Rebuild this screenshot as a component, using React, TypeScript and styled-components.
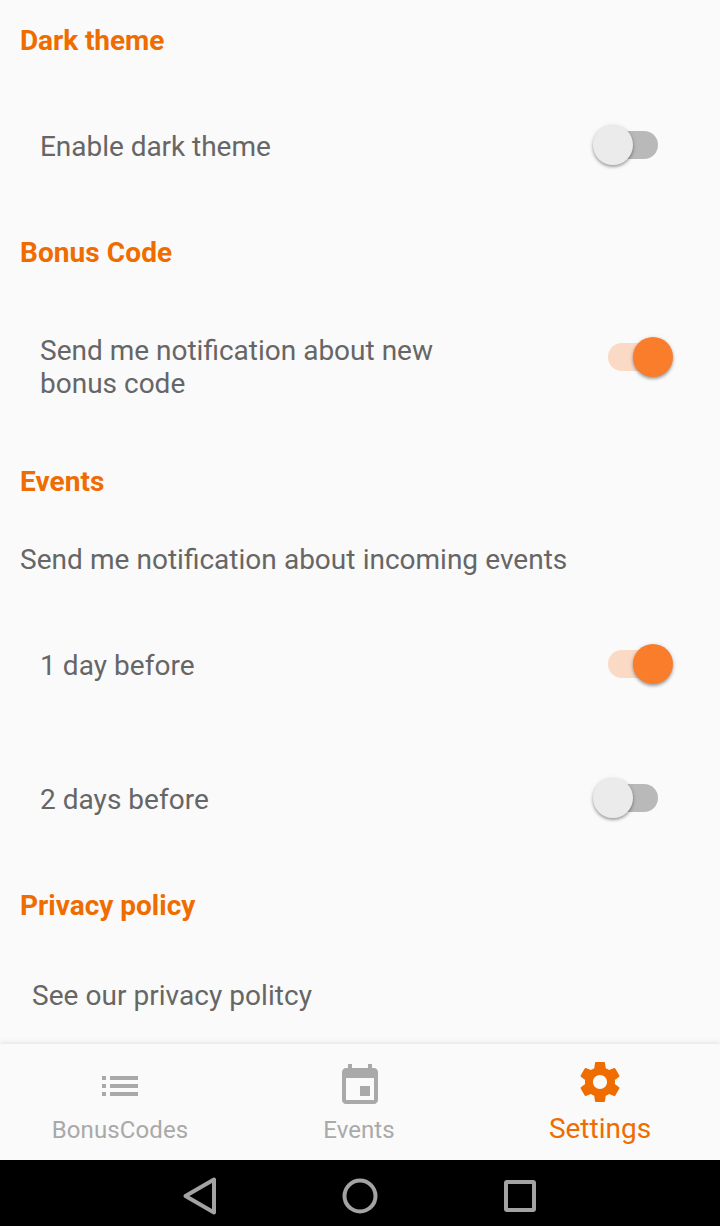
import React from 'react';
import styled, { createGlobalStyle } from 'styled-components';

const GlobalStyle = createGlobalStyle`
  * { box-sizing: border-box; }
  body { margin: 0; background: #fafafa; font-family: Roboto, sans-serif; }
`;
const Screen = styled.div`
  width: 720px; height: 1226px; display: flex; flex-direction: column;
  background: #fafafa; overflow: hidden;
`;
const Content = styled.main`
  flex: 1; min-height: 0; overflow: hidden; padding-top: 24px;
`;
const Heading = styled.h2<{ $track?: number }>`
  margin: 0; padding-left: 20px; height: 33px;
  font-size: 28px; line-height: 33px; font-weight: 700; color: #ef6c00;
  letter-spacing: ${p => p.$track ?? 0}px;
`;
const Row = styled.div<{ $h: number; $pad?: number }>`
  display: flex; align-items: center; justify-content: space-between;
  height: ${p => p.$h}px; padding: 0 62px 0 ${p => p.$pad ?? 40}px;
`;
const Label = styled.span<{ $w?: number; $track?: number; $words?: number }>`
  font-size: 28px; line-height: 33px; color: #666;
  letter-spacing: ${p => p.$track ?? 0}px;
  word-spacing: ${p => p.$words ?? 0}px;
  width: ${p => (p.$w ? p.$w + 'px' : 'auto')}; white-space: ${p => (p.$w ? 'normal' : 'nowrap')};
`;
const Toggle = styled.button<{ $on?: boolean; $up?: number }>`
  display: flex; align-items: center; justify-content: ${p => (p.$on ? 'flex-end' : 'flex-start')};
  border: 0; width: 50px; height: 28px; padding: 0; border-radius: 14px;
  background: ${p => (p.$on ? '#fad9c5' : '#b9b9b9')};
  margin-bottom: ${p => p.$up ?? 3}px;
`;
const Thumb = styled.span<{ $on?: boolean }>`
  flex: none; width: 40px; height: 40px; border-radius: 50%;
  margin: ${p => (p.$on ? '0 -15px 0 0' : '0 0 0 -15px')};
  background: ${p => (p.$on ? '#f97d2b' : '#ebebeb')};
  box-shadow: 0 2px 3px rgba(0,0,0,.28), 0 1px 5px rgba(0,0,0,.14);
`;
const Tabs = styled.nav`
  height: 116px; display: grid; grid-template-columns: repeat(3, 1fr);
  background: #fafafa; box-shadow: 0 -1px 5px rgba(0,0,0,.1); z-index: 1;
`;
const Tab = styled.a<{ $active?: boolean }>`
  display: flex; flex-direction: column; align-items: center;
  padding-top: ${p => (p.$active ? 14 : 18)}px;
  color: ${p => (p.$active ? '#ef6c00' : '#a9a9a9')};
  font-size: ${p => (p.$active ? 28 : 24)}px; line-height: 32px;
  svg { width: 48px; height: 48px; display: block; fill: currentColor; }
`;
const TabLabel = styled.span<{ $top: number; $track?: number; $shift?: number }>`
  margin-top: ${p => p.$top}px; margin-right: ${p => p.$shift ?? 0}px;
  letter-spacing: ${p => p.$track ?? 0}px;
`;
const SystemBar = styled.footer`
  height: 66px; background: #000; display: flex; justify-content: center; padding-top: 16px; gap: 120px;
  svg { width: 40px; height: 40px; display: block; fill: none; stroke: #a3a3a3; stroke-width: 4; }
`;

function Switch({ on, up }: { on?: boolean; up?: number }) {
  return <Toggle type="button" role="switch" aria-checked={!!on} $on={on} $up={up}><Thumb $on={on} /></Toggle>;
}

export default function App() {
  return (
    <Screen>
      <GlobalStyle />
      <Content>
        <Heading $track={-0.08}>Dark theme</Heading>
        <Row $h={179}><Label $track={-0.04}>Enable dark theme</Label><Switch /></Row>
        <Heading $track={0.08}>Bonus Code</Heading>
        <Row $h={196}><Label $w={420}>Send me notification about new bonus code</Label><Switch on up={20} /></Row>
        <Heading $track={0.08}>Events</Heading>
        <Row $h={123} $pad={20}><Label $words={0.25}>Send me notification about incoming events</Label></Row>
        <Row $h={89}><Label $track={0.06}>1 day before</Label><Switch on /></Row>
        <Row $h={179}><Label $track={0.03}>2 days before</Label><Switch /></Row>
        <Heading>Privacy policy</Heading>
        <Row $h={147} $pad={32}><Label $track={0.045}>See our privacy politcy</Label></Row>
      </Content>
      <Tabs>
        <Tab>
          <svg viewBox="0 0 48 48"><path d="M6 14h4v4H6zM14 14h28v4H14zM6 22h4v4H6zM14 22h28v4H14zM6 30h4v4H6zM14 30h28v4H14z" /></svg>
          <TabLabel $top={4} $track={0.1}>BonusCodes</TabLabel>
        </Tab>
        <Tab>
          <svg viewBox="0 0 24 24"><path d="M17 12h-5v5h5v-5zM16 1v2H8V1H6v2H5c-1.11 0-1.99.9-1.99 2L3 19c0 1.1.89 2 2 2h14c1.1 0 2-.9 2-2V5c0-1.1-.9-2-2-2h-1V1h-2zm3 18H5V8h14v11z" /></svg>
          <TabLabel $top={4} $track={0.08} $shift={2}>Events</TabLabel>
        </Tab>
        <Tab $active>
          <svg viewBox="0 0 24 24"><path d="M19.43 12.98c.04-.32.07-.64.07-.98s-.03-.66-.07-.98l2.11-1.65c.19-.15.24-.42.12-.64l-2-3.46c-.12-.22-.39-.3-.61-.22l-2.49 1c-.52-.4-1.08-.73-1.69-.98l-.38-2.65C14.46 2.18 14.25 2 14 2h-4c-.25 0-.46.18-.49.42l-.38 2.65c-.61.25-1.17.59-1.69.98l-2.49-1c-.23-.09-.49 0-.61.22l-2 3.46c-.13.22-.07.49.12.64l2.11 1.65c-.04.32-.07.65-.07.98s.03.66.07.98l-2.11 1.65c-.19.15-.24.42-.12.64l2 3.46c.12.22.39.3.61.22l2.49-1c.52.4 1.08.73 1.69.98l.38 2.65c.03.24.24.42.49.42h4c.25 0 .46-.18.49-.42l.38-2.65c.61-.25 1.17-.59 1.69-.98l2.49 1c.23.09.49 0 .61-.22l2-3.46c.12-.22.07-.49-.12-.64l-2.11-1.65zM12 15.5c-1.93 0-3.5-1.57-3.5-3.5s1.57-3.5 3.5-3.5 3.5 1.57 3.5 3.5-1.57 3.5-3.5 3.5z" /></svg>
          <TabLabel $top={7}>Settings</TabLabel>
        </Tab>
      </Tabs>
      <SystemBar>
        <svg viewBox="0 0 40 40"><path d="M34 3.5v33L5.5 20z" strokeLinejoin="round" /></svg>
        <svg viewBox="0 0 40 40"><circle cx="20" cy="20" r="15.5" /></svg>
        <svg viewBox="0 0 40 40"><rect x="6" y="6" width="28" height="28" rx="1" /></svg>
      </SystemBar>
    </Screen>
  );
}
